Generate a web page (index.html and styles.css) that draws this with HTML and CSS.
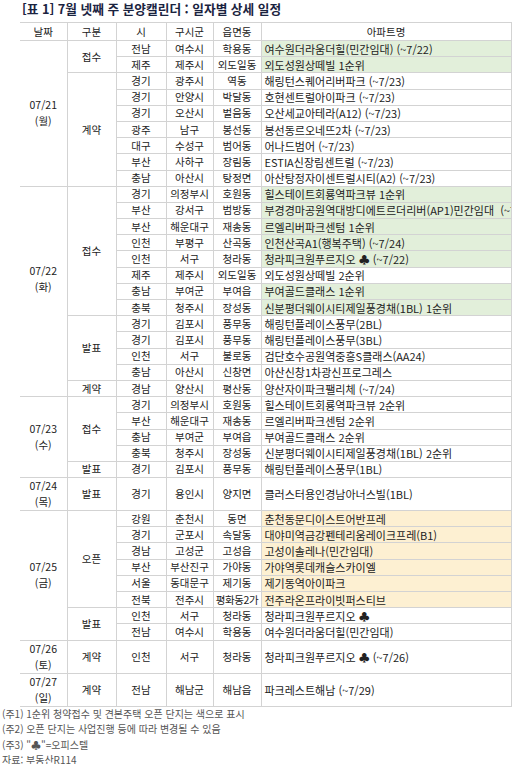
FILE: index.html
```html
<!DOCTYPE html>
<html lang="ko">
<head>
<meta charset="utf-8">
<title>분양캘린더</title>
<link rel="stylesheet" href="styles.css">
</head>
<body>
<div class="page">
<h1 class="title">[표 1] 7월 넷째 주 분양캘린더 : 일자별 상세 일정</h1>
<table class="cal">
<colgroup><col class="c-date"><col class="c-type"><col class="c-si"><col class="c-gu"><col class="c-dong"><col class="c-apt"></colgroup>
<thead>
<tr><th class="date">날짜</th><th>구분</th><th>시</th><th>구시군</th><th>읍면동</th><th class="apt-h">아파트명</th></tr>
</thead>
<tbody>
<tr><td rowspan="9" class="date">07/21<br>(월)</td><td rowspan="2" class="type">접수</td><td>전남</td><td>여수시</td><td>학용동</td><td class="apt g">여수원더라움더힐(민간임대) (~7/22)</td></tr>
<tr><td>제주</td><td>제주시</td><td>외도일동</td><td class="apt g">외도성원상떼빌 1순위</td></tr>
<tr><td rowspan="7" class="type">계약</td><td>경기</td><td>광주시</td><td>역동</td><td class="apt">해링턴스퀘어리버파크 (~7/23)</td></tr>
<tr><td>경기</td><td>안양시</td><td>박달동</td><td class="apt">호현센트럴아이파크 (~7/23)</td></tr>
<tr><td>경기</td><td>오산시</td><td>벌음동</td><td class="apt">오산세교아테라(A12) (~7/23)</td></tr>
<tr><td>광주</td><td>남구</td><td>봉선동</td><td class="apt">봉선동르오네뜨2차 (~7/23)</td></tr>
<tr><td>대구</td><td>수성구</td><td>범어동</td><td class="apt">어나드범어 (~7/23)</td></tr>
<tr><td>부산</td><td>사하구</td><td>장림동</td><td class="apt">ESTIA신장림센트럴 (~7/23)</td></tr>
<tr><td>충남</td><td>아산시</td><td>탕정면</td><td class="apt">아산탕정자이센트럴시티(A2) (~7/23)</td></tr>
</tbody>
<tbody>
<tr><td rowspan="13" class="date raised">07/22<br>(화)</td><td rowspan="8" class="type">접수</td><td>경기</td><td>의정부시</td><td>호원동</td><td class="apt g">힐스테이트회룡역파크뷰 1순위</td></tr>
<tr><td>부산</td><td>강서구</td><td>범방동</td><td class="apt g">부경경마공원역대방디에트르더리버(AP1)민간임대 &nbsp;(~7/23)</td></tr>
<tr><td>부산</td><td>해운대구</td><td>재송동</td><td class="apt g">르엘리버파크센텀 1순위</td></tr>
<tr><td>인천</td><td>부평구</td><td>산곡동</td><td class="apt g">인천산곡A1(행복주택) (~7/24)</td></tr>
<tr><td>인천</td><td>서구</td><td>청라동</td><td class="apt g">청라피크원푸르지오 ♣ (~7/22)</td></tr>
<tr><td>제주</td><td>제주시</td><td>외도일동</td><td class="apt">외도성원상떼빌 2순위</td></tr>
<tr><td>충남</td><td>부여군</td><td>부여읍</td><td class="apt g">부여골드클래스 1순위</td></tr>
<tr><td>충북</td><td>청주시</td><td>장성동</td><td class="apt g">신분평더웨이시티제일풍경채(1BL) 1순위</td></tr>
<tr><td rowspan="4" class="type">발표</td><td>경기</td><td>김포시</td><td>풍무동</td><td class="apt">해링턴플레이스풍무(2BL)</td></tr>
<tr><td>경기</td><td>김포시</td><td>풍무동</td><td class="apt">해링턴플레이스풍무(3BL)</td></tr>
<tr><td>인천</td><td>서구</td><td>불로동</td><td class="apt">검단호수공원역중흥S클래스(AA24)</td></tr>
<tr><td>충남</td><td>아산시</td><td>신창면</td><td class="apt">아산신창1차광신프로그레스</td></tr>
<tr><td class="type">계약</td><td>경남</td><td>양산시</td><td>평산동</td><td class="apt">양산자이파크팰리체 (~7/24)</td></tr>
</tbody>
<tbody>
<tr><td rowspan="5" class="date">07/23<br>(수)</td><td rowspan="4" class="type">접수</td><td>경기</td><td>의정부시</td><td>호원동</td><td class="apt">힐스테이트회룡역파크뷰 2순위</td></tr>
<tr><td>부산</td><td>해운대구</td><td>재송동</td><td class="apt">르엘리버파크센텀 2순위</td></tr>
<tr><td>충남</td><td>부여군</td><td>부여읍</td><td class="apt">부여골드클래스 2순위</td></tr>
<tr><td>충북</td><td>청주시</td><td>장성동</td><td class="apt">신분평더웨이시티제일풍경채(1BL) 2순위</td></tr>
<tr><td class="type">발표</td><td>경기</td><td>김포시</td><td>풍무동</td><td class="apt">해링턴플레이스풍무(1BL)</td></tr>
</tbody>
<tbody>
<tr class="tall"><td class="date">07/24<br>(목)</td><td class="type">발표</td><td>경기</td><td>용인시</td><td>양지면</td><td class="apt">클러스터용인경남아너스빌(1BL)</td></tr>
</tbody>
<tbody>
<tr><td rowspan="8" class="date">07/25<br>(금)</td><td rowspan="6" class="type">오픈</td><td>강원</td><td>춘천시</td><td>동면</td><td class="apt y">춘천동문디이스트어반프레</td></tr>
<tr><td>경기</td><td>군포시</td><td>속달동</td><td class="apt y">대야미역금강펜테리움레이크프레(B1)</td></tr>
<tr><td>경남</td><td>고성군</td><td>고성읍</td><td class="apt y">고성이솔레나(민간임대)</td></tr>
<tr><td>부산</td><td>부산진구</td><td>가야동</td><td class="apt y">가야역롯데캐슬스카이엘</td></tr>
<tr><td>서울</td><td>동대문구</td><td>제기동</td><td class="apt y">제기동역아이파크</td></tr>
<tr><td>전북</td><td>전주시</td><td class="narrow">평화동2가</td><td class="apt y">전주라온프라이빗퍼스티브</td></tr>
<tr><td rowspan="2" class="type">발표</td><td>인천</td><td>서구</td><td>청라동</td><td class="apt">청라피크원푸르지오 ♣</td></tr>
<tr><td>전남</td><td>여수시</td><td>학용동</td><td class="apt">여수원더라움더힐(민간임대)</td></tr>
</tbody>
<tbody>
<tr class="tall"><td class="date">07/26<br>(토)</td><td class="type">계약</td><td>인천</td><td>서구</td><td>청라동</td><td class="apt">청라피크원푸르지오 ♣ (~7/26)</td></tr>
</tbody>
<tbody>
<tr class="tall"><td class="date">07/27<br>(일)</td><td class="type">계약</td><td>전남</td><td>해남군</td><td>해남읍</td><td class="apt">파크레스트해남 (~7/29)</td></tr>
</tbody>
</table>
<div class="notes">
<p>(주1) 1순위 청약접수 및 견본주택 오픈 단지는 색으로 표시</p>
<p>(주2) 오픈 단지는 사업진행 등에 따라 변경될 수 있음</p>
<p>(주3) "♣"=오피스텔</p>
<p>자료: 부동산R114</p>
</div>
</div>
</body>
</html>
```
FILE: styles.css
```css
html, body {
  margin: 0;
  padding: 0;
  background: #ffffff;
}
body {
  width: 514px;
  font-family: "Noto Sans CJK KR", "Noto Sans", sans-serif;
  color: #222222;
}
.page {
  padding: 0;
}
.title {
  margin: 0 0 0 22px;
  height: 22px;
  font-size: 12.7px;
  line-height: 17px;
  font-weight: bold;
  color: #1a2340;
  white-space: nowrap;
}
.cal {
  margin-left: 20px;
  width: 491px;
  border-collapse: collapse;
  table-layout: fixed;
  font-size: 10.5px;
}
.c-date { width: 47px; }
.c-type { width: 49px; }
.c-si { width: 50px; }
.c-gu { width: 47px; }
.c-dong { width: 48px; }
.c-apt { width: 250px; }
.cal th, .cal td {
  padding: 0;
  border: 1px solid #d3d3d3;
  text-align: center;
  vertical-align: middle;
  white-space: nowrap;
  overflow: hidden;
  font-weight: normal;
  line-height: 14px;
}
.cal th {
  height: 17px;
  font-size: 10.5px;
}
.cal tr {
  height: 16.2px;
}
.cal tr.tall {
  height: 32px;
}
.cal .date {
  border-left: none;
  line-height: 16px;
}
.cal .date.raised {
  padding-bottom: 24px;
}
.cal .apt {
  text-align: left;
  padding-left: 3px;
  font-size: 11px;
}
.cal .apt-h {
  text-align: center;
}
.cal .g {
  background: #e2efda;
}
.cal .y {
  background: #fdf0d2;
}
.cal .narrow {
  letter-spacing: -0.4px;
}
.notes {
  margin-top: -1px;
  padding-left: 2px;
  font-size: 10px;
  color: #555555;
}
.notes p {
  margin: 0;
  line-height: 15.5px;
}
```
